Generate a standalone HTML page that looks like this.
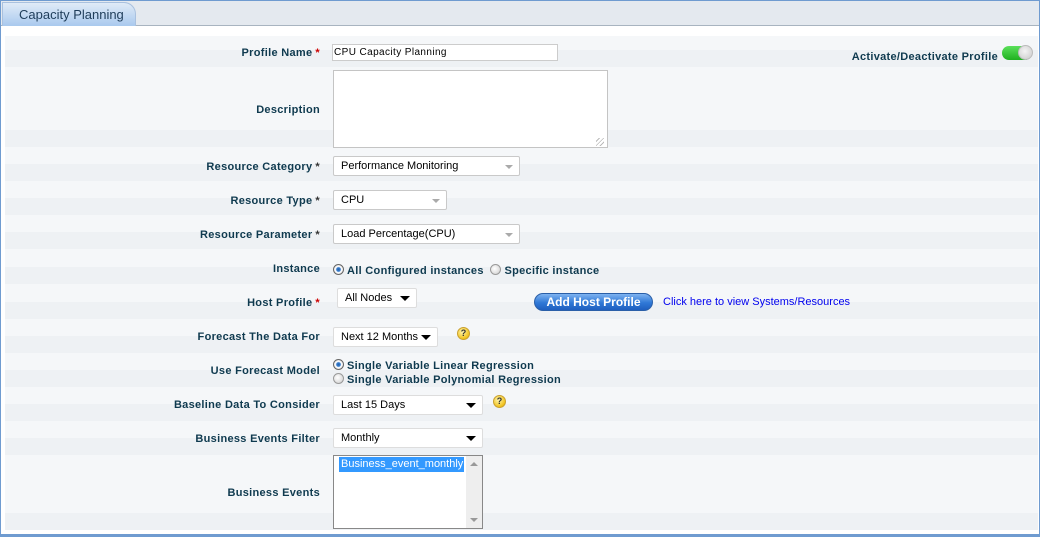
<!DOCTYPE html>
<html><head><meta charset="utf-8">
<style>
*{margin:0;padding:0;box-sizing:border-box}
body{width:1040px;height:537px;overflow:hidden;background:#fff;font-family:"Liberation Sans",Arial,sans-serif;position:relative}
.frame{position:absolute;left:0;top:0;width:1040px;height:537px;border:1px solid #6f9bd0}
.tabbar{position:absolute;left:1px;top:1px;width:1038px;height:25px;background:#e4e9ef;border-bottom:1px solid #a8b4c0}
.tab{position:absolute;left:1px;top:1px;width:134px;height:24px;background:linear-gradient(#e0ebf7,#a9c9ee);border:1px solid #a9c1df;border-bottom:none;border-radius:0 12px 0 0;font-size:13px;color:#1f3d5a;padding:4px 0 0 16px}
.row{position:absolute;left:5px;width:1033px;background:linear-gradient(to bottom,#f5f7f9 0,#f5f7f9 calc(100% - 17px),#eef1f4 calc(100% - 17px),#eef1f4 100%)}
.lbl{position:absolute;right:720px;font-size:11px;font-weight:bold;color:#0f3a4f;white-space:nowrap;letter-spacing:0.3px}
.star{color:#c00;font-weight:bold;margin-left:3px}
.abs{position:absolute}
.sel{position:absolute;height:20px;background:#fff;border:1px solid #c9c9c9;border-radius:2px;font-size:11px;color:#000;padding:3px 0 0 7px;white-space:nowrap}
.sel .ar{position:absolute;right:6px;top:8px;border-left:4px solid transparent;border-right:4px solid transparent;border-top:4px solid #aaa}
.sel .ar.d{border-left-width:5px;border-right-width:5px;border-top:5px solid #000;top:7px}
.rad{display:inline-block;width:11px;height:11px;border-radius:50%;border:1px solid #999;background:radial-gradient(circle at 40% 40%,#fff,#ccc);vertical-align:-1px;margin-right:3px}
.rad.on{background:radial-gradient(circle,#1f5fa8 0,#3a7fd0 30%,#fff 45%,#ccc 100%);border-color:#666}
.txt{font-size:11px;font-weight:bold;color:#0f3a4f;white-space:nowrap;letter-spacing:0.3px}
.help{position:absolute;width:13px;height:13px;border-radius:50%;background:radial-gradient(circle at 40% 35%,#fff6b0,#f1c21b 70%,#c9981a);border:1px solid #c9a030;font-size:9px;font-weight:bold;text-align:center;line-height:11px;color:#333}
</style></head><body>
<div class="frame"></div>
<div class="tabbar"><div class="tab">Capacity Planning</div></div>

<div class="row" style="top:36px;height:31px"></div>
<div class="row" style="top:67px;height:80px"></div>
<div class="row" style="top:147px;height:34px"></div>
<div class="row" style="top:181px;height:34px"></div>
<div class="row" style="top:215px;height:34px"></div>
<div class="row" style="top:249px;height:35px"></div>
<div class="row" style="top:284px;height:35px"></div>
<div class="row" style="top:319px;height:34px"></div>
<div class="row" style="top:353px;height:34px"></div>
<div class="row" style="top:387px;height:34px"></div>
<div class="row" style="top:421px;height:34px"></div>
<div class="row" style="top:455px;height:75px"></div>

<div class="lbl" style="top:47px">Profile Name<span class="star">*</span></div>
<div class="abs" style="left:332px;top:44px;width:226px;height:17px;background:#fff;border:1px solid #ccc;font-size:10px;padding:2px 0 0 1px;letter-spacing:0.4px">CPU Capacity Planning</div>
<div class="abs txt" style="right:42px;top:51px">Activate/Deactivate Profile</div>
<div class="abs" style="left:1002px;top:46px;width:30px;height:14px;border-radius:7px;background:linear-gradient(#5be05b,#1fb01f)"></div>
<div class="abs" style="left:1018px;top:45px;width:15px;height:15px;border-radius:50%;background:radial-gradient(circle at 45% 40%,#f4f4f4,#c8c8c8);border:1px solid #bbb"></div>

<div class="lbl" style="top:104px">Description</div>
<div class="abs" style="left:333px;top:70px;width:275px;height:78px;background:#fff;border:1px solid #c4c4c4"></div>
<div class="abs" style="left:596px;top:138px;width:8px;height:8px;background:repeating-linear-gradient(135deg,transparent 0 2px,#bbb 2px 3px)"></div>

<div class="lbl" style="top:161px">Resource Category<span class="star" style="color:#333">*</span></div>
<div class="sel" style="left:333px;top:156px;width:187px">Performance Monitoring<span class="ar"></span></div>

<div class="lbl" style="top:195px">Resource Type<span class="star" style="color:#333">*</span></div>
<div class="sel" style="left:333px;top:190px;width:114px">CPU<span class="ar"></span></div>

<div class="lbl" style="top:229px">Resource Parameter<span class="star" style="color:#333">*</span></div>
<div class="sel" style="left:333px;top:224px;width:187px">Load Percentage(CPU)<span class="ar"></span></div>

<div class="lbl" style="top:263px">Instance</div>
<div class="abs txt" style="left:333px;top:264px"><span class="rad on"></span>All Configured instances&nbsp;&nbsp;<span class="rad"></span>Specific instance</div>

<div class="lbl" style="top:297px">Host Profile<span class="star">*</span></div>
<div class="sel" style="left:337px;top:288px;width:80px;border-color:#ddd">All Nodes<span class="ar d"></span></div>
<div class="abs" style="left:534px;top:293px;width:119px;height:18px;border-radius:9px;background:linear-gradient(#7fb3f0,#2f78d6 55%,#1f5fbf);border:1px solid #2a5fa8;color:#fff;font-size:12px;font-weight:bold;text-align:center;line-height:16px">Add Host Profile</div>
<div class="abs" style="left:663px;top:296px;font-size:11px;color:#0000ee">Click here to view Systems/Resources</div>

<div class="lbl" style="top:331px">Forecast The Data For</div>
<div class="sel" style="left:333px;top:327px;width:105px;border-color:#ddd">Next 12 Months<span class="ar d"></span></div>
<div class="help" style="left:457px;top:327px">?</div>

<div class="lbl" style="top:365px">Use Forecast Model</div>
<div class="abs txt" style="left:333px;top:359px;line-height:14px"><span class="rad on"></span>Single Variable Linear Regression<br><span class="rad"></span>Single Variable Polynomial Regression</div>

<div class="lbl" style="top:399px">Baseline Data To Consider</div>
<div class="sel" style="left:333px;top:395px;width:150px;border-color:#ddd">Last 15 Days<span class="ar d"></span></div>
<div class="help" style="left:493px;top:395px">?</div>

<div class="lbl" style="top:433px">Business Events Filter</div>
<div class="sel" style="left:333px;top:428px;width:150px;border-color:#ddd">Monthly<span class="ar d"></span></div>

<div class="lbl" style="top:487px">Business Events</div>
<div class="abs" style="left:333px;top:455px;width:150px;height:74px;background:#fff;border:1px solid #888"></div>
<div class="abs" style="left:339px;top:457px;width:125px;height:15px;background:#3399ff;color:#fff;font-size:11px;padding:1px 0 0 2px">Business_event_monthly</div>
<div class="abs" style="left:466px;top:456px;width:16px;height:72px;background:#eee"></div>
<div class="abs" style="left:470px;top:462px;border-left:4px solid transparent;border-right:4px solid transparent;border-bottom:4px solid #999"></div>
<div class="abs" style="left:470px;top:518px;border-left:4px solid transparent;border-right:4px solid transparent;border-top:4px solid #999"></div>
<div class="abs" style="left:1px;top:534px;width:1038px;height:2px;background:#6f9bd0"></div>
</body></html>
